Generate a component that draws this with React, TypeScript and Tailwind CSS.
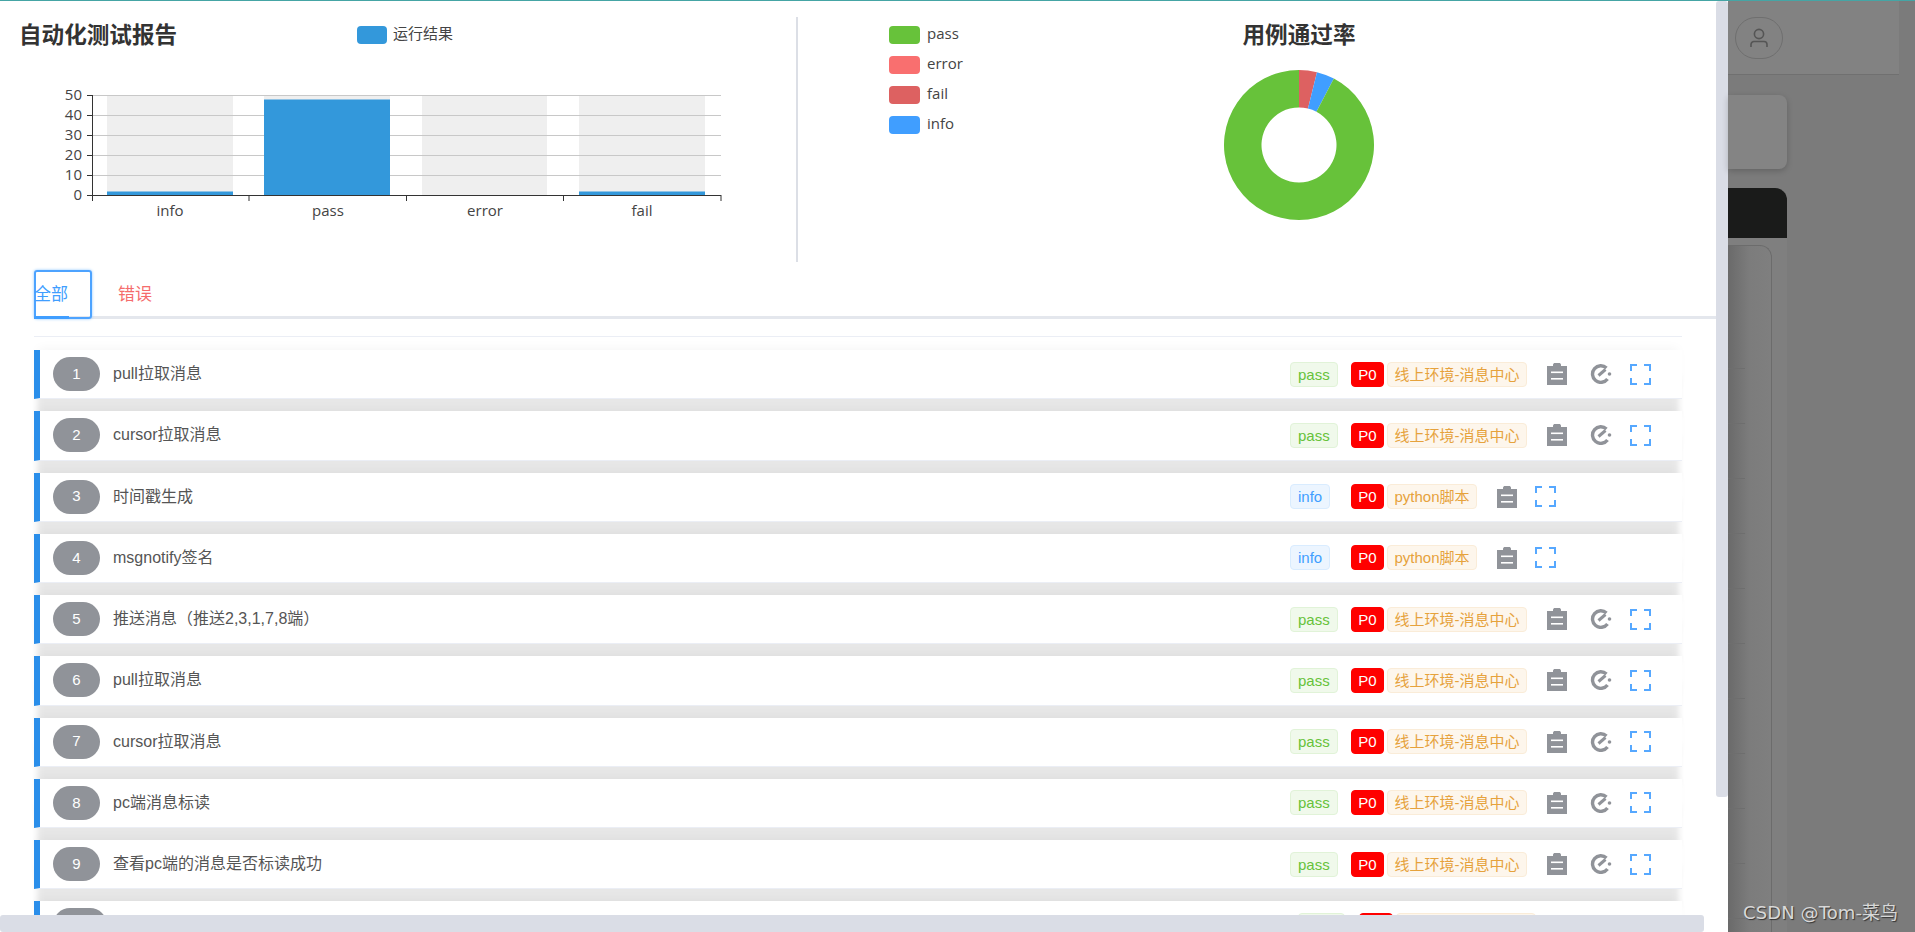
const rows = [
  { n: 1, title: 'pull拉取消息', status: 'pass', env: '线上环境-消息中心', gauge: true },
  { n: 2, title: 'cursor拉取消息', status: 'pass', env: '线上环境-消息中心', gauge: true },
  { n: 3, title: '时间戳生成', status: 'info', env: 'python脚本', gauge: false },
  { n: 4, title: 'msgnotify签名', status: 'info', env: 'python脚本', gauge: false },
  { n: 5, title: '推送消息（推送2,3,1,7,8端）', status: 'pass', env: '线上环境-消息中心', gauge: true },
  { n: 6, title: 'pull拉取消息', status: 'pass', env: '线上环境-消息中心', gauge: true },
  { n: 7, title: 'cursor拉取消息', status: 'pass', env: '线上环境-消息中心', gauge: true },
  { n: 8, title: 'pc端消息标读', status: 'pass', env: '线上环境-消息中心', gauge: true },
  { n: 9, title: '查看pc端的消息是否标读成功', status: 'pass', env: '线上环境-消息中心', gauge: true },
];

const bars = [
  { x: 107, w: 126, v: 2, label: 'info', cx: 170 },
  { x: 264, w: 126, v: 48, label: 'pass', cx: 328 },
  { x: 422, w: 125, v: 0, label: 'error', cx: 485 },
  { x: 579, w: 126, v: 2, label: 'fail', cx: 642 },
];

const pieLegend = [
  { label: 'pass', color: 'bg-[#67c23a]' },
  { label: 'error', color: 'bg-[#f96f6f]' },
  { label: 'fail', color: 'bg-[#dd6161]' },
  { label: 'info', color: 'bg-[#409eff]' },
];

const tones: Record<string, string> = {
  pass: 'bg-[#f0f9eb] border-[#e1f3d8] text-[#67c23a]',
  info: 'bg-[#ecf5ff] border-[#d9ecff] text-[#409eff]',
  env: 'bg-[#fdf6ec] border-[#faecd8] text-[#e6a23c]',
  p0: 'bg-[#ff0000] border-[#ff0000] text-white',
};

const rowClass =
  'h-[49.25px] w-[1648px] mb-[12px] flex items-center bg-white border-l-[6px] border-b border-l-[#2a8eea] border-b-[#ebeef5] shadow-[0_22px_6px_-3px_rgba(0,0,0,0.095),0_-6px_10px_-4px_rgba(0,0,0,0.04)]';

// donut slice in a 150x150 box, angles in degrees clockwise from the top
function slice(from: number, to: number) {
  const pt = (r: number, a: number) => {
    const t = (a * Math.PI) / 180;
    return `${75 + r * Math.sin(t)} ${75 - r * Math.cos(t)}`;
  };
  const large = to - from > 180 ? 1 : 0;
  return `M${pt(75, from)}A75 75 0 ${large} 1 ${pt(75, to)}L${pt(37.5, to)}A37.5 37.5 0 ${large} 0 ${pt(37.5, from)}Z`;
}

function ClipboardIcon() {
  return (
    <svg width="20" height="22" viewBox="0 0 20 22" className="shrink-0">
      <path fill="#909399" d="M0 3h6V1.5L7 0h6l1 1.5V3h6v19H0z" />
      <rect x="4" y="8.5" width="12" height="1.6" fill="#fff" />
      <rect x="4" y="15" width="12" height="1.6" fill="#fff" />
    </svg>
  );
}

function GaugeIcon() {
  return (
    <svg width="22" height="20" viewBox="0 0 22 20" className="shrink-0 ml-[23px]">
      <path fill="none" stroke="#909399" strokeWidth="3.4" d="M16.5 4A8.3 8.3 0 1 0 17.5 15" />
      <path fill="none" stroke="#909399" strokeWidth="3" d="M8.5 11.5L15.5 5.5" />
      <circle cx="19.5" cy="10" r="1.8" fill="#909399" />
    </svg>
  );
}

function FullscreenIcon() {
  return (
    <svg width="21" height="21" viewBox="0 0 21 21" className="shrink-0 ml-[18px]">
      <path
        fill="none"
        stroke="#56a8ff"
        strokeWidth="2"
        d="M1 7V1h6M14 1h6v6M20 14v6h-6M7 20H1v-6"
      />
    </svg>
  );
}

function Tag({ text, tone, className = '' }: { text: string; tone: string; className?: string }) {
  return (
    <span className={`h-[25px] border rounded-[4px] text-[15px] leading-[23px] text-center whitespace-nowrap ${tones[tone]} ${className}`}>
      {text}
    </span>
  );
}

function Row({ row }: { row: (typeof rows)[number] }) {
  return (
    <div className={rowClass}>
      <span className="w-[47px] h-[34px] ml-[13px] rounded-[17px] bg-[#909399] text-white text-[15px] flex items-center justify-center shrink-0">
        {row.n}
      </span>
      <span className="ml-[13px] flex-1 text-[16px] text-[#555]">{row.title}</span>
      <div className="w-[392px] flex items-center shrink-0">
        <div className="w-[61px] flex">
          <Tag text={row.status} tone={row.status} className="px-[7px]" />
        </div>
        <Tag text="P0" tone="p0" className="w-[33px]" />
        <div className="ml-[3px] mr-[20px] flex">
          <Tag text={row.env} tone="env" className="px-[6.5px]" />
        </div>
        <ClipboardIcon />
        {row.gauge && <GaugeIcon />}
        <FullscreenIcon />
      </div>
    </div>
  );
}

// tenth row: only its top edge shows above the horizontal scrollbar
function PeekRow() {
  return (
    <div className={rowClass}>
      <span className="w-[54px] h-[34px] ml-[13px] rounded-[17px] bg-[#909399] shrink-0" />
      <span className="flex-1" />
      <div className="w-[392px] pl-[8px] flex items-center shrink-0">
        <Tag text="" tone="pass" className="w-[47px]" />
        <Tag text="" tone="p0" className="w-[34px] ml-[14px]" />
        <Tag text="" tone="env" className="w-[140px] ml-[3px]" />
      </div>
    </div>
  );
}

function BarChart() {
  const y = (v: number) => 124.5 - v * 2;
  const font = { fontFamily: '"Open Sans", sans-serif', fontSize: 15 };
  return (
    <svg width="796" height="160" className="block">
      {bars.map((b) => (
        <rect key={b.label} x={b.x} y={24} width={b.w} height={101} fill="#efefef" />
      ))}
      {[10, 20, 30, 40, 50].map((v) => (
        <line key={v} x1="92" x2="721" y1={y(v)} y2={y(v)} stroke="#c8c8c8" />
      ))}
      {bars.map((b) => (
        <rect key={b.label} x={b.x} y={y(b.v)} width={b.w} height={b.v * 2 + 0.5} fill="#3398db" />
      ))}
      <path fill="none" stroke="#333" d="M92.5 24v101M92 124.5h629.5M87 24.5h5M87 44.5h5M87 64.5h5M87 84.5h5M87 104.5h5M87 124.5h5M92.5 125v5M249 125v5M406.5 125v5M563.5 125v5M721 125v5" />
      {[0, 10, 20, 30, 40, 50].map((v) => (
        <text key={v} x="82" y={y(v) + 4} textAnchor="end" fill="#444" style={font}>
          {v}
        </text>
      ))}
      {bars.map((b) => (
        <text key={b.label} x={b.cx} y="145" textAnchor="middle" fill="#444" style={font}>
          {b.label}
        </text>
      ))}
    </svg>
  );
}

function Backdrop() {
  return (
    <div className="flex-1 flex flex-col bg-[#7b7b7b] relative">
      <div className="w-[171px] h-[74px] pl-[7px] pt-[16px] bg-[#828282] border-b border-[#707070] shrink-0">
        <div className="w-[48px] h-[42px] rounded-full border border-[#6f6f6f] flex items-center justify-center">
          <svg width="18" height="20" viewBox="0 0 18 20" fill="none" stroke="#555" strokeWidth="1.6">
            <circle cx="9" cy="6" r="4.6" />
            <path d="M1 19v-2.5a3 3 0 0 1 3-3h10a3 3 0 0 1 3 3V19" />
          </svg>
        </div>
      </div>
      <div className="w-[59px] h-[74px] mt-[20px] bg-[#848484] rounded-r-lg shadow-[0_2px_6px_rgba(0,0,0,0.2)] shrink-0" />
      <div className="w-[59px] h-[50px] mt-[19px] bg-[#1a1b1a] rounded-tr-xl shrink-0" />
      <div className="w-[59px] flex-1 pt-[7px] bg-[#7f7f7f] flex">
        <div className="w-[44px] rounded-tr-xl border-t border-r border-[#6c6c6c] bg-gradient-to-r from-[#6a6a6a] via-[#7c7c7c] to-[#7f7f7f]">
          <div className="w-[17px] h-[123px] border-b border-[#6e6e6e]" />
          {[0, 1, 2, 3, 4, 5, 6, 7, 8, 9].map((i) => (
            <div key={i} className="w-[17px] h-[55px] border-b border-[#6e6e6e]" />
          ))}
        </div>
      </div>
      <span className="absolute left-[15px] bottom-[6px] text-[18px] text-[#d8d8d8] whitespace-nowrap [text-shadow:1px_1px_1px_#333] [font-family:'DejaVu_Sans','Noto_Sans_CJK_SC',sans-serif] tracking-[0.1px]">
        CSDN @Tom-菜鸟
      </span>
    </div>
  );
}

export default function App() {
  return (
    <div className="w-[1915px] h-[932px] overflow-hidden flex flex-col [font-family:'Liberation_Sans','Noto_Sans_CJK_SC',sans-serif]">
      <div className="h-px bg-[#45a5a5] shrink-0" />
      <div className="flex-1 min-h-0 flex">
        {/* Report drawer */}
        <div className="w-[1728px] shrink-0 flex bg-white relative">
          <div className="w-[1716px] overflow-hidden">
            <div className="h-[269px] flex [font-family:'Open_Sans','Noto_Sans_CJK_SC',sans-serif] text-[#333]">
              <div className="w-[796px] shrink-0">
                <div className="h-[70px] flex items-start pt-[19px] pl-5">
                  <h2 className="w-[338px] -ml-px text-[22.6px] leading-[30px] font-bold">自动化测试报告</h2>
                  <div className="h-[30px] flex items-center gap-[6px] text-[15px] text-[#444]">
                    <span className="w-[30px] h-[18px] rounded-[4px] bg-[#3398db]" />
                    <span className="mb-[3px]">运行结果</span>
                  </div>
                </div>
                <BarChart />
              </div>
              <div className="w-[2px] h-[245px] mt-[16px] bg-[#dcdfe6] shrink-0" />
              <div className="w-[401px] shrink-0 pl-[91px] pt-[25px] flex flex-col gap-[12px]">
                {pieLegend.map((l) => (
                  <div key={l.label} className="h-[18px] flex items-center gap-[7px] text-[15px] text-[#444]">
                    <span className={`w-[31px] h-[18px] rounded-[4px] ${l.color}`} />
                    <span className="mb-[3px]">{l.label}</span>
                  </div>
                ))}
              </div>
              <div className="w-[200px] shrink-0 pt-[19px] flex flex-col items-center">
                <h2 className="text-[22.6px] leading-[30px] font-bold">用例通过率</h2>
                <svg width="150" height="150" viewBox="0 0 150 150" className="mt-[20px]">
                  <path d={slice(0, 13.85)} fill="#dd6161" />
                  <path d={slice(13.85, 27.7)} fill="#409eff" />
                  <path d={slice(27.7, 360)} fill="#67c23a" />
                </svg>
              </div>
            </div>

            <div className="ml-[34px]">
              <div className="h-[49px] flex items-start border-b-[3px] border-[#e4e7ed]">
                <div className="relative w-[58px] h-[49px] shrink-0 border-2 border-[#4da3ff] rounded-[3px] shadow-[0_0_3px_#8cc5ff] text-[17px] leading-[46px] text-[#409eff] whitespace-nowrap">
                  <span className="-ml-[2px]">全部</span>
                  <span className="absolute -left-[2px] -bottom-[2px] w-[35px] h-[3px] bg-[#409eff]" />
                </div>
                <span className="ml-[26px] text-[17px] leading-[50px] text-[#f56c6c]">错误</span>
              </div>
              <div className="w-[1648px] h-px mt-[17px] mb-[13px] bg-[#ebeef5]" />
              {rows.map((r) => (
                <Row key={r.n} row={r} />
              ))}
              <PeekRow />
            </div>
          </div>
          <div className="w-[12px] h-[796px] rounded-[3px] bg-[#dadde6] shrink-0" />
          <div className="absolute left-0 bottom-0 w-[1704px] h-[17px] rounded-[3px] bg-[#dadde6]" />
        </div>
        <Backdrop />
      </div>
    </div>
  );
}
